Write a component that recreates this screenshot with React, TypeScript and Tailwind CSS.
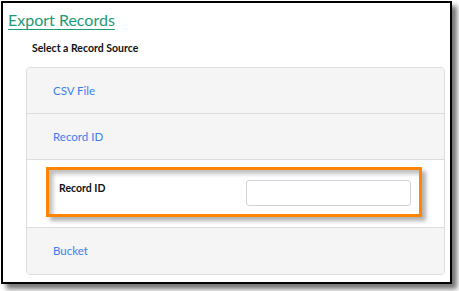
import React from 'react';

const font = { fontFamily: 'Lato, "Open Sans", sans-serif' };

const SourceRow: React.FC<{ label: string; last?: boolean }> = ({ label, last }) => (
  <div className={`h-[46px] flex items-center pl-[26px] bg-[#f5f5f5] ${last ? '' : 'border-b border-[#dddddd]'}`}>
    <span className="text-[11.5px] text-[#3d7ef2]">{label}</span>
  </div>
);

export default function App() {
  return (
    <div className="w-[459px] h-[291px] bg-white pt-[1px] pl-[1px]" style={font}>
      <div className="w-[451px] h-[283px] border-2 border-black bg-white shadow-[5px_5px_5px_rgba(0,0,0,0.55)] flex flex-col">
        <div className="pl-[5px] pt-[5px] h-[26px]">
          <span className="text-[16px] leading-[18px] text-[#1e9a74] underline underline-offset-[3px]">Export Records</span>
        </div>
        <div className="pl-[29px] pt-[13px] h-[38px] text-[10.5px] leading-[12px] font-bold text-[#111]">Select a Record Source</div>
        <div className="ml-[23px] w-[419px] border border-[#dddddd] rounded-[4px] overflow-hidden">
          <SourceRow label="CSV File" />
          <SourceRow label="Record ID" />
          <div className="h-[68px] bg-white border-b border-[#dddddd] pt-[7px] pl-[19px]">
            <div className="w-[376px] h-[50px] border-[3px] border-[#ff8500] flex items-start justify-between pl-[10px] pr-[8px] pt-[10px] shadow-[4px_4px_4px_rgba(0,0,0,0.3),inset_4px_4px_4px_rgba(0,0,0,0.25)]">
              <span className="text-[10.5px] font-bold text-[#111] mt-[1px]">Record ID</span>
              <input className="w-[165px] h-[26px] border border-[#cfd4da] rounded-[3px] bg-white outline-none" />
            </div>
          </div>
          <SourceRow label="Bucket" last />
        </div>
      </div>
    </div>
  );
}
